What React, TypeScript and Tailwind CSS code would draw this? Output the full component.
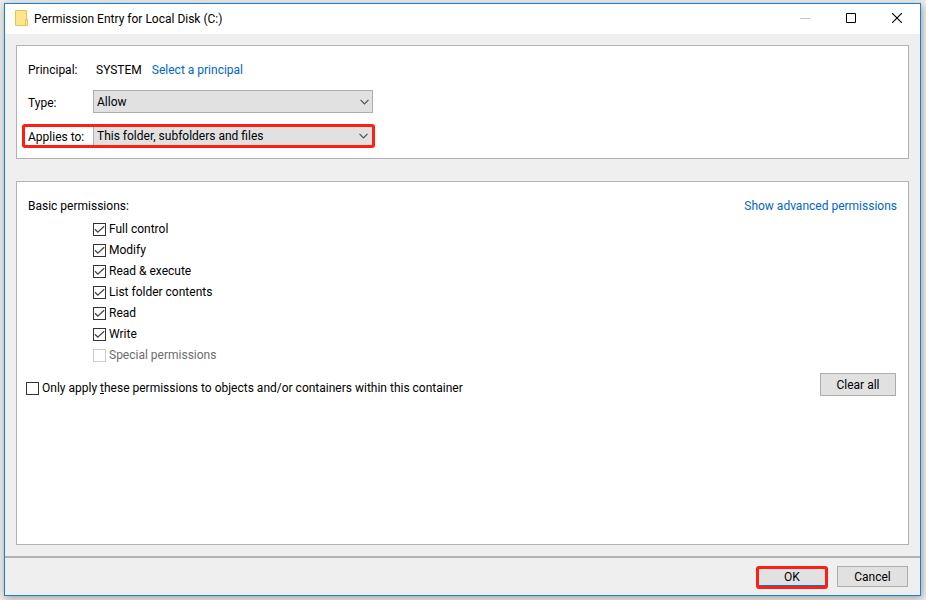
import { useState } from "react";

interface Permission {
  id: string;
  label: string;
  disabled?: boolean;
}

interface CheckBoxProps {
  id: string;
  checked: boolean;
  disabled?: boolean;
  onChange: () => void;
}

const PERMISSIONS: Permission[] = [
  { id: "full", label: "Full control" },
  { id: "modify", label: "Modify" },
  { id: "execute", label: "Read & execute" },
  { id: "list", label: "List folder contents" },
  { id: "read", label: "Read" },
  { id: "write", label: "Write" },
  { id: "special", label: "Special permissions", disabled: true },
];

function CheckBox({ id, checked, disabled, onChange }: CheckBoxProps) {
  return (
    <span className="grid size-[13px] shrink-0">
      <input
        id={id}
        type="checkbox"
        checked={checked}
        disabled={disabled}
        onChange={onChange}
        className="col-start-1 row-start-1 size-[13px] appearance-none border border-[#333333] bg-white disabled:border-[#cccccc]"
      />
      {checked && (
        <svg
          viewBox="0 0 13 13"
          className="pointer-events-none col-start-1 row-start-1 size-[13px]"
          fill="none"
          stroke="#444444"
          strokeWidth="1.3"
        >
          <path d="M2 6.2 L4.8 9.2 L11.2 3.2" />
        </svg>
      )}
    </span>
  );
}

function Chevron() {
  return (
    <svg
      viewBox="0 0 9 6"
      className="pointer-events-none col-start-1 row-start-1 mr-1 h-[6px] w-[9px] self-center justify-self-end"
      fill="none"
      stroke="#505050"
      strokeWidth="1.2"
    >
      <path d="M0.5 0.8 L4.5 4.8 L8.5 0.8" />
    </svg>
  );
}

export default function App() {
  const [checked, setChecked] = useState<string[]>(["full", "modify", "execute", "list", "read", "write"]);
  const [onlyThis, setOnlyThis] = useState(false);

  const toggle = (id: string) => {
    setChecked((prev) => (prev.includes(id) ? prev.filter((p) => p !== id) : [...prev, id]));
  };

  return (
    <div className="flex min-h-screen flex-col bg-[#ececec] pt-[3px] pr-[5px] pb-1 pl-1 font-['Roboto','Open_Sans',sans-serif] text-[12px] leading-4 text-black">
      <div className="flex flex-1 flex-col border border-[#1a7fd0] bg-[#efefef] shadow-[1px_2px_8px_#00000055]">
        {/* Title bar */}
        <header className="flex h-[30px] items-center bg-white pl-[10px]">
          <svg viewBox="0 0 13 16" className="mb-[2px] h-4 w-[13px]">
            <path d="M0.5 0.5H11.5V9.5H12.5V15.5H0.5Z" fill="#ffe48f" stroke="#e8c44d" />
            <path d="M10.5 15.5V9.5H12.5V15.5Z" fill="#ffeaa6" stroke="#e8c44d" />
          </svg>
          <h1 className="ml-[6px]">Permission Entry for Local Disk (C:)</h1>
          <div className="ml-auto flex">
            <button
              type="button"
              aria-label="Minimize"
              disabled
              className="grid h-[30px] w-[46px] place-items-center pb-[2px]"
            >
              <svg viewBox="0 0 10 10" className="size-[10px]" stroke="#c4c4c4">
                <path d="M0 5.5H10" />
              </svg>
            </button>
            <button
              type="button"
              aria-label="Maximize"
              className="grid h-[30px] w-[46px] place-items-center pb-[2px]"
            >
              <svg viewBox="0 0 10 10" className="size-[10px]" fill="none" stroke="#000000">
                <path d="M0.5 0.5H9.5V9.5H0.5Z" />
              </svg>
            </button>
            <button type="button" aria-label="Close" className="grid h-[30px] w-[46px] place-items-center pb-[2px]">
              <svg viewBox="0 0 10 10" className="size-[10px]" stroke="#000000" strokeWidth="1.1">
                <path d="M0 0L10 10M10 0L0 10" />
              </svg>
            </button>
          </div>
        </header>

        <main className="flex flex-1 flex-col gap-[22px] px-[11px] py-[11px]">
          {/* Principal */}
          <section className="border border-[#b2b2b2] bg-white px-[5px] pt-[14px] pb-[10px]">
            <div className="flex h-5 items-center pl-[6px]">
              <span className="w-[68px]">Principal:</span>
              <span>SYSTEM</span>
              <a href="#principal" className="ml-[10px] text-[#0066cc]">
                Select a principal
              </a>
            </div>

            <div className="mt-[10px] flex items-center pl-[6px]">
              <label htmlFor="type" className="w-[65px] pt-[2px]">
                Type:
              </label>
              <div className="grid w-[280px]">
                <select
                  id="type"
                  className="col-start-1 row-start-1 h-[23px] appearance-none border border-[#adadad] bg-[#e1e1e1] px-[3px]"
                >
                  <option>Allow</option>
                  <option>Deny</option>
                </select>
                <Chevron />
              </div>
            </div>

            <div className="mt-[11px] flex h-6 w-[353px] items-center rounded-[3px] border-3 border-[#ff1f12] pl-[3px]">
              <label htmlFor="applies" className="w-[65px] shrink-0 pt-[2px]">
                Applies to:
              </label>
              <div className="grid flex-1">
                <select
                  id="applies"
                  className="col-start-1 row-start-1 h-[18px] appearance-none border-l border-[#adadad] bg-[#e1e1e1] px-[3px]"
                >
                  <option>This folder, subfolders and files</option>
                  <option>This folder only</option>
                </select>
                <Chevron />
              </div>
            </div>
          </section>

          {/* Permissions */}
          <section className="flex-1 border border-[#b2b2b2] bg-white pt-4">
            <div className="flex justify-between px-[11px]">
              <h2>Basic permissions:</h2>
              <a href="#advanced" className="text-[#0066cc]">
                Show advanced permissions
              </a>
            </div>

            <ul className="mt-[5px] pl-[76px]">
              {PERMISSIONS.map((p) => (
                <li key={p.id} className="flex h-[21px] items-center">
                  <CheckBox
                    id={p.id}
                    checked={checked.includes(p.id)}
                    disabled={p.disabled}
                    onChange={() => toggle(p.id)}
                  />
                  <label
                    htmlFor={p.id}
                    className={p.disabled ? "pb-[2px] pl-[3px] text-[#6d6d6d]" : "pb-[2px] pl-[3px]"}
                  >
                    {p.label}
                  </label>
                </li>
              ))}
            </ul>

            <div className="mt-[7px] flex items-start justify-between pr-3 pl-[9px]">
              <div className="flex items-center pt-[7px]">
                <CheckBox id="only" checked={onlyThis} onChange={() => setOnlyThis(!onlyThis)} />
                <label htmlFor="only" className="pl-[3px]">
                  Only apply <u>t</u>hese permissions to objects and/or containers within this container
                </label>
              </div>
              <button
                type="button"
                onClick={() => setChecked([])}
                className="h-[23px] w-[76px] border border-[#adadad] bg-[#e1e1e1]"
              >
                Clear all
              </button>
            </div>
          </section>
        </main>

        <footer className="flex items-start justify-end gap-[9px] border-t-2 border-[#b2b2b2] pt-2 pr-3 pb-[6px]">
          <button
            type="button"
            className="h-[23px] w-[72px] rounded-[3px] border-3 border-[#ff1f12] bg-[#e1e1e1] pb-[2px] shadow-[inset_0_-1px_0_#0078d7]"
          >
            OK
          </button>
          <button type="button" className="h-[21px] w-[71px] border border-[#adadad] bg-[#e1e1e1]">
            Cancel
          </button>
        </footer>
      </div>
    </div>
  );
}
